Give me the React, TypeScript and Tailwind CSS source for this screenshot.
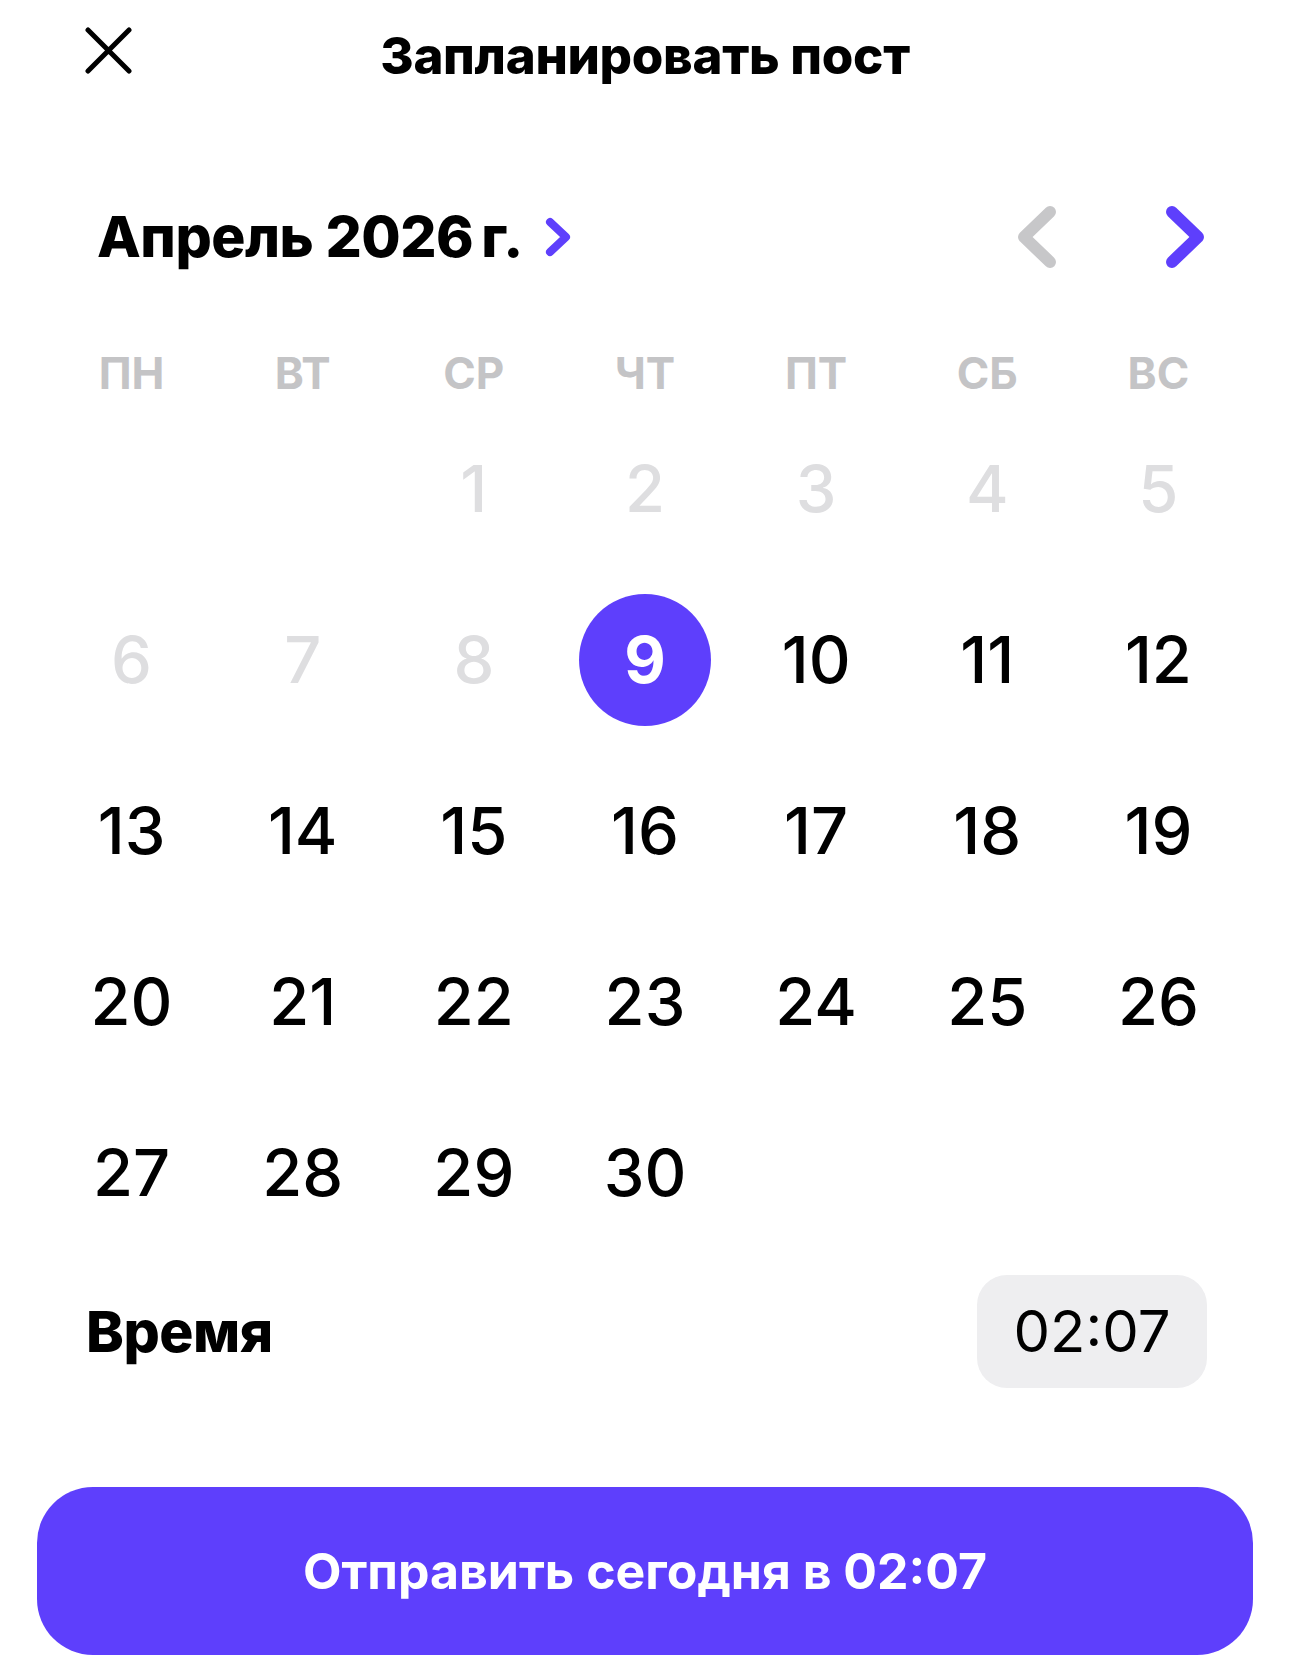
import React from 'react';

const weekdays = ['ПН', 'ВТ', 'СР', 'ЧТ', 'ПТ', 'СБ', 'ВС'];

// April 2026 starts on Wednesday
const cells: (number | null)[] = [null, null, ...Array.from({ length: 30 }, (_, i) => i + 1)];
const today = 9;

function Chevron({ dir, className }: { dir: 'left' | 'right'; className?: string }) {
  return (
    <svg viewBox="0 0 39 62" className={className} fill="none">
      <polyline
        points={dir === 'left' ? '33,6 7,31 33,56' : '6,6 32,31 6,56'}
        stroke="currentColor"
        strokeWidth="12"
        strokeLinecap="round"
        strokeLinejoin="round"
      />
    </svg>
  );
}

export default function App() {
  return (
    <div className="flex h-[1672px] w-[1290px] flex-col bg-white font-['Inter',sans-serif] text-black">
      {/* Header */}
      <div className="relative flex h-[112px] items-center justify-center">
        <button className="absolute left-[85px] top-[27px] h-[47px] w-[47px] text-black">
          <svg viewBox="0 0 47 47" className="h-full w-full" fill="none">
            <path d="M3 3 L44 44 M44 3 L3 44" stroke="currentColor" strokeWidth="5" strokeLinecap="round" />
          </svg>
        </button>
        <h1 className="text-[51px] font-extrabold tracking-[-0.3px]">Запланировать пост</h1>
      </div>

      {/* Month row */}
      <div className="mt-[75px] flex h-[100px] items-center pl-[97px] pr-[85px]">
        <div className="flex items-center gap-[22px]">
          <span className="text-[57px] font-extrabold tracking-[-0.5px]">Апрель 2026&thinsp;г.</span>
          <svg viewBox="0 0 27 40" className="h-[40px] w-[27px] text-[#5e3ffc]" fill="none">
            <polyline points="5,5 21,20 5,35" stroke="currentColor" strokeWidth="8" strokeLinecap="round" strokeLinejoin="round" />
          </svg>
        </div>
        <div className="ml-auto flex items-center gap-[110px]">
          <Chevron dir="left" className="h-[62px] w-[39px] text-[#c7c7c9]" />
          <Chevron dir="right" className="h-[62px] w-[39px] text-[#5e3ffc]" />
        </div>
      </div>

      {/* Weekdays */}
      <div className="mt-[53px] mb-[3px] grid h-[60px] grid-cols-7 items-center px-[46px]">
        {weekdays.map((d) => (
          <div key={d} className="text-center text-[44px] font-bold text-[#c4c4c6]">
            {d}
          </div>
        ))}
      </div>

      {/* Days */}
      <div className="grid grid-cols-7 px-[46px]">
        {cells.map((n, i) => (
          <div key={i} className="flex h-[171px] items-center justify-center">
            {n === null ? null : n === today ? (
              <div className="flex h-[132px] w-[132px] items-center justify-center rounded-full bg-[#5e3ffc] text-[64px] font-bold text-white">
                {n}
              </div>
            ) : (
              <span className={`text-[65px] font-medium ${n < today ? 'text-[#dedee0]' : 'text-black'}`}>{n}</span>
            )}
          </div>
        ))}
      </div>

      {/* Time */}
      <div className="mt-[17px] flex h-[113px] items-center pl-[86px] pr-[83px]">
        <span className="text-[57px] font-extrabold tracking-[-0.5px]">Время</span>
        <div className="ml-auto flex h-[113px] w-[230px] items-center justify-center rounded-[30px] bg-[#eeeef0] text-[58px]">
          02:07
        </div>
      </div>

      {/* Submit */}
      <div className="mt-[99px] px-[37px]">
        <button className="flex h-[168px] w-full items-center justify-center rounded-[56px] bg-[#5e3ffc] text-[50px] font-bold text-white">
          Отправить сегодня в 02:07
        </button>
      </div>
    </div>
  );
}
